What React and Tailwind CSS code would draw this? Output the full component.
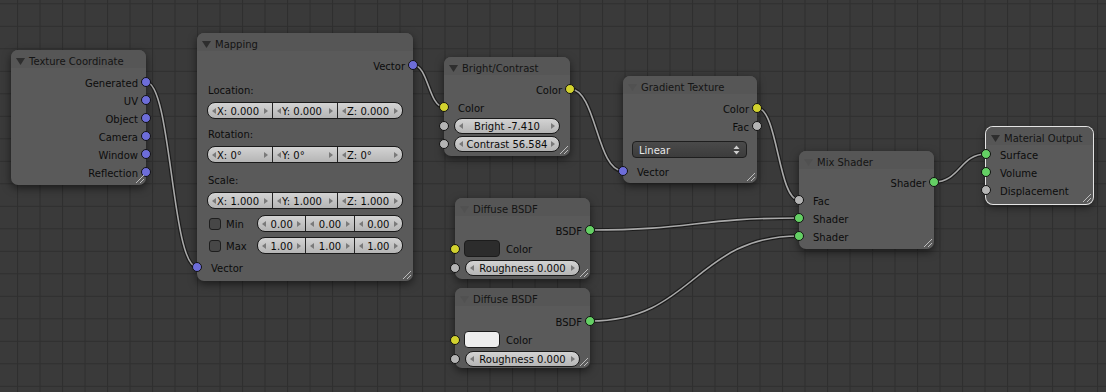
import React from 'react';

const BLUE = 'bg-[#6d6dd9]';
const YEL = 'bg-[#d2d22e]';
const GRN = 'bg-[#64d064]';
const GRY = 'bg-[#b4b4b4]';

// wires: [x1, y1, x2, y2], socket centres
const wires = [
  [146, 82, 197, 267],
  [413, 65, 444, 107],
  [570, 89, 623, 171],
  [757, 108, 799, 200],
  [590, 230, 799, 218],
  [590, 321, 799, 236],
  [934, 182, 986, 154],
];

const curve = ([x1, y1, x2, y2]) => {
  const d = Math.abs(x2 - x1) * 0.5;
  return `M${x1} ${y1}C${x1 + d} ${y1} ${x2 - d} ${y2} ${x2} ${y2}`;
};

function Tri({ dim }) {
  return (
    <svg width="9" height="7" viewBox="0 0 9 7" className="shrink-0">
      <path d="M0 0H9L4.5 7Z" fill={dim ? '#515151' : '#2e2e2e'} />
    </svg>
  );
}

function Grip() {
  return (
    <svg width="9" height="9" viewBox="0 0 9 9" className="absolute right-[2px] bottom-[2px]">
      <path d="M9 1L1 9M9 5L5 9" stroke="#bdbdbd" strokeWidth="1" />
    </svg>
  );
}

function Node({ pos, title, dim, active, children }) {
  return (
    <div
      className={`absolute ${pos} rounded-[7px] bg-[#5a5a5a] text-[#0c0c0c] shadow-[0_3px_9px_rgba(0,0,0,0.55)] ${
        active ? 'ring-1 ring-[#e4e4e4]' : ''
      }`}
    >
      <div className="flex items-center gap-[4px] h-[18px] pt-[5px] pl-[5px] rounded-t-[7px] bg-[#565656] text-[#141414]">
        <Tri dim={dim} />
        <span>{title}</span>
      </div>
      {children}
      <Grip />
    </div>
  );
}

function Sock({ side, c }) {
  return (
    <span
      className={`absolute top-1/2 -mt-[5px] w-[10px] h-[10px] rounded-full border border-[#111111] ${
        side === 'l' ? '-left-[5px]' : '-right-[5px]'
      } ${c}`}
    />
  );
}

function Out({ label, c }) {
  return (
    <div className="relative flex items-center justify-end h-[18px] pt-[3px] pr-[8px]">
      {label}
      <Sock side="r" c={c} />
    </div>
  );
}

function In({ label, c, cls = '' }) {
  return (
    <div className={`relative flex items-center h-[18px] pt-[3px] pl-[14px] ${cls}`}>
      {label}
      <Sock side="l" c={c} />
    </div>
  );
}

function Arr({ r }) {
  return (
    <svg width="4" height="6" viewBox="0 0 4 6" className="shrink-0">
      <path d={r ? 'M0 0L4 3L0 6Z' : 'M4 0L0 3L4 6Z'} fill="#7a7a7a" />
    </svg>
  );
}

// left: labelled values ("X: 0.000") sit right after the left arrow
function Field({ items, left, cls = '' }) {
  return (
    <div
      className={`flex rounded-[8px] border border-[#1a1a1a] bg-linear-to-b from-[#d3d3d3] to-[#b5b5b5] overflow-hidden text-[#0a0a0a] ${cls}`}
    >
      {items.map((t, i) => (
        <div
          key={i}
          className={`flex-1 flex items-center px-[4px] ${left ? 'gap-[1px]' : 'justify-between'} ${
            i ? 'border-l border-[#262626]' : ''
          }`}
        >
          <Arr />
          <span className="pt-[2px]">{t}</span>
          {left ? <span className="flex-1" /> : null}
          <Arr r />
        </div>
      ))}
    </div>
  );
}

function Label({ text, cls }) {
  return <div className={`flex items-center h-[18px] pt-[3px] ${cls}`}>{text}</div>;
}

function Check({ label, vals, cls }) {
  return (
    <div className={`flex items-center h-[17px] ${cls}`}>
      <div className="flex items-center w-[50px] shrink-0">
        <span className="ml-[2px] w-[12px] h-[12px] rounded-[3px] bg-[#474747] border border-[#1e1e1e]" />
        <span className="ml-[5px] pt-[2px]">{label}</span>
      </div>
      <Field items={vals} cls="flex-1 h-[17px]" />
    </div>
  );
}

function SockField({ text, cls }) {
  return (
    <div className={`relative ${cls}`}>
      <Field items={[text]} cls="h-[16px] mx-[10px]" />
      <Sock side="l" c={GRY} />
    </div>
  );
}

function Swatch({ color, cls }) {
  return (
    <div className={`relative flex items-center h-[17px] ${cls}`}>
      <span className={`ml-[9px] w-[36px] h-[17px] rounded-[4px] border border-[#1c1c1c] ${color}`} />
      <span className="ml-[6px] pt-[2px]">Color</span>
      <Sock side="l" c={YEL} />
    </div>
  );
}

function Diffuse({ pos, swatch, top }) {
  return (
    <Node pos={pos} title="Diffuse BSDF" dim>
      <div className={top}>
        <Out label="BSDF" c={GRN} />
        <Swatch color={swatch} cls="mt-[1px]" />
        <SockField text="Roughness 0.000" cls="mt-[3px]" />
      </div>
    </Node>
  );
}

export default function App() {
  return (
    <div className="relative w-[1106px] h-[392px] overflow-hidden bg-[#3a3a3a] text-[10px] leading-none font-['DejaVu_Sans','Liberation_Sans',sans-serif]">
      <svg className="absolute inset-0" width="1106" height="392">
        <defs>
          <pattern id="grid" x="17" y="3.3" width="22.5" height="22.5" patternUnits="userSpaceOnUse">
            <path d="M0 0H22.5M0 0V22.5" stroke="#2f2f2f" strokeWidth="2.2" fill="none" />
          </pattern>
        </defs>
        <rect width="1106" height="392" fill="url(#grid)" />
        {wires.map((w, i) => (
          <g key={i} fill="none">
            <path d={curve(w)} stroke="#1c1c1c" strokeWidth="4" />
            <path d={curve(w)} stroke="#a9a9a9" strokeWidth="1.6" />
          </g>
        ))}
      </svg>

      <Node pos="left-[11px] top-[50px] w-[135px] h-[135px]" title="Texture Coordinate">
        <div className="pt-[5px]">
          {['Generated', 'UV', 'Object', 'Camera', 'Window', 'Reflection'].map((l) => (
            <Out key={l} label={l} c={BLUE} />
          ))}
        </div>
      </Node>

      <Node pos="left-[197px] top-[33px] w-[216px] h-[248px]" title="Mapping">
        <div className="pt-[5px]">
          <Out label="Vector" c={BLUE} />
          <div className="px-[10px]">
            <Label text="Location:" cls="mt-[6px] pl-[1px]" />
            <Field left items={['X: 0.000', 'Y: 0.000', 'Z: 0.000']} cls="h-[17px] mt-[4px]" />
            <Label text="Rotation:" cls="mt-[5px] pl-[1px]" />
            <Field left items={['X: 0°', 'Y: 0°', 'Z: 0°']} cls="h-[17px] mt-[4px]" />
            <Label text="Scale:" cls="mt-[7px] pl-[1px]" />
            <Field left items={['X: 1.000', 'Y: 1.000', 'Z: 1.000']} cls="h-[17px] mt-[4px]" />
            <Check label="Min" vals={['0.00', '0.00', '0.00']} cls="mt-[6px]" />
            <Check label="Max" vals={['1.00', '1.00', '1.00']} cls="mt-[5px]" />
          </div>
          <In label="Vector" c={BLUE} cls="mt-[4px]" />
        </div>
      </Node>

      <Node pos="left-[444px] top-[57px] w-[126px] h-[99px]" title="Bright/Contrast">
        <div className="pt-[5px]">
          <Out label="Color" c={YEL} />
          <In label="Color" c={YEL} />
          <SockField text="Bright -7.410" cls="mt-[2px]" />
          <SockField text="Contrast 56.584" cls="mt-[2px]" />
        </div>
      </Node>

      <Node pos="left-[623px] top-[76px] w-[134px] h-[107px]" title="Gradient Texture" dim>
        <div className="pt-[5px]">
          <Out label="Color" c={YEL} />
          <Out label="Fac" c={GRY} />
          <div className="flex items-center justify-between h-[17px] mt-[6px] ml-[9px] mr-[10px] pl-[6px] pr-[6px] rounded-[4px] border border-[#1e1e1e] bg-linear-to-b from-[#4a4a4a] to-[#3c3c3c] text-[#e8e8e8]">
            <span className="pt-[2px]">Linear</span>
            <svg width="7" height="10" viewBox="0 0 7 10">
              <path d="M0.5 4L3.5 0.5L6.5 4ZM0.5 6L3.5 9.5L6.5 6Z" fill="#cfcfcf" />
            </svg>
          </div>
          <In label="Vector" c={BLUE} cls="mt-[4px]" />
        </div>
      </Node>

      <Diffuse pos="left-[455px] top-[198px] w-[135px] h-[81px]" swatch="bg-[#2c2c2c]" top="pt-[5px]" />
      <Diffuse pos="left-[455px] top-[288px] w-[135px] h-[80px]" swatch="bg-[#eeeeee]" top="pt-[6px]" />

      <Node pos="left-[799px] top-[151px] w-[135px] h-[98px]" title="Mix Shader" dim>
        <div className="pt-[4px]">
          <Out label="Shader" c={GRN} />
          <In label="Fac" c={GRY} />
          <In label="Shader" c={GRN} />
          <In label="Shader" c={GRN} />
        </div>
      </Node>

      <Node pos="left-[986px] top-[127px] w-[107px] h-[77px]" title="Material Output" active>
        <div>
          <In label="Surface" c={GRN} />
          <In label="Volume" c={GRN} />
          <In label="Displacement" c={GRY} />
        </div>
      </Node>
    </div>
  );
}
